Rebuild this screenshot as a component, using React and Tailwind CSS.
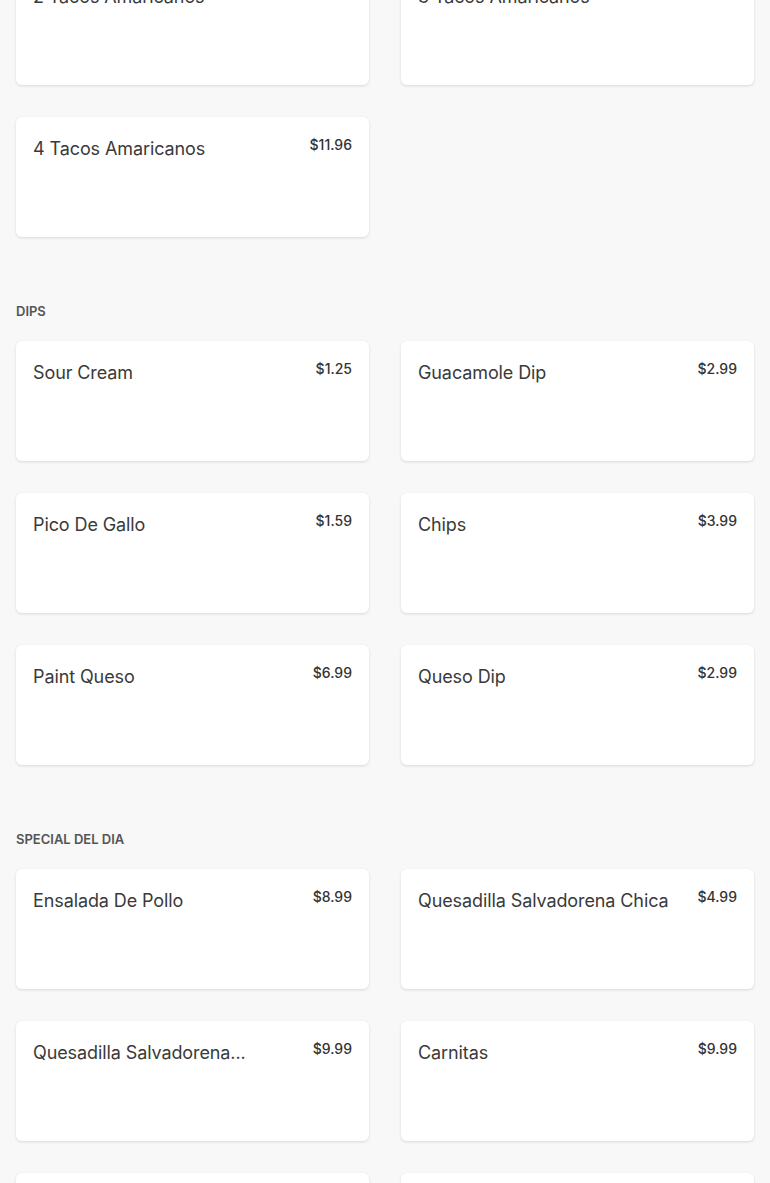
import React from 'react';

const sections = [
  {
    name: null,
    items: [
      { title: '2 Tacos Amaricanos', price: '$5.98' },
      { title: '3 Tacos Amaricanos', price: '$8.97' },
      { title: '4 Tacos Amaricanos', price: '$11.96' },
    ],
  },
  {
    name: 'Dips',
    items: [
      { title: 'Sour Cream', price: '$1.25' },
      { title: 'Guacamole Dip', price: '$2.99' },
      { title: 'Pico De Gallo', price: '$1.59' },
      { title: 'Chips', price: '$3.99' },
      { title: 'Paint Queso', price: '$6.99' },
      { title: 'Queso Dip', price: '$2.99' },
    ],
  },
  {
    name: 'Special Del Dia',
    items: [
      { title: 'Ensalada De Pollo', price: '$8.99' },
      { title: 'Quesadilla Salvadorena Chica', price: '$4.99' },
      { title: 'Quesadilla Salvadorena...', price: '$9.99' },
      { title: 'Carnitas', price: '$9.99' },
      { title: 'Pupusas De Queso', price: '$2.50' },
      { title: 'Pupusas Revueltas', price: '$2.50' },
    ],
  },
];

function ItemCard({ title, price }) {
  return (
    <div className="h-[120px] bg-white rounded-md shadow-[0_1px_3px_rgba(0,0,0,0.13)] px-[17px] pt-[18px] flex items-start justify-between gap-3">
      <h3 className="mt-px text-[18px] leading-[26px] text-[#3a3a3a] truncate tracking-[-0.1px]">{title}</h3>
      <span className="text-[14px] leading-[20px] font-medium text-[#333] shrink-0">{price}</span>
    </div>
  );
}

export default function App() {
  return (
    <div className="min-h-screen bg-[#f8f8f8] overflow-hidden" style={{ fontFamily: 'Inter, "Noto Sans", sans-serif' }}>
      <div className="px-4 -mt-[35px] pb-10">
        {sections.map((section, i) => (
          <section key={i} className={i > 0 ? 'mt-16' : ''}>
            {section.name && (
              <h2 className="h-5 mb-5 pt-0.5 flex items-center text-[13px] font-semibold uppercase text-[#555]">
                {section.name}
              </h2>
            )}
            <div className="grid grid-cols-2 gap-x-8 gap-y-8">
              {section.items.map((item) => (
                <ItemCard key={item.title} {...item} />
              ))}
            </div>
          </section>
        ))}
      </div>
    </div>
  );
}
